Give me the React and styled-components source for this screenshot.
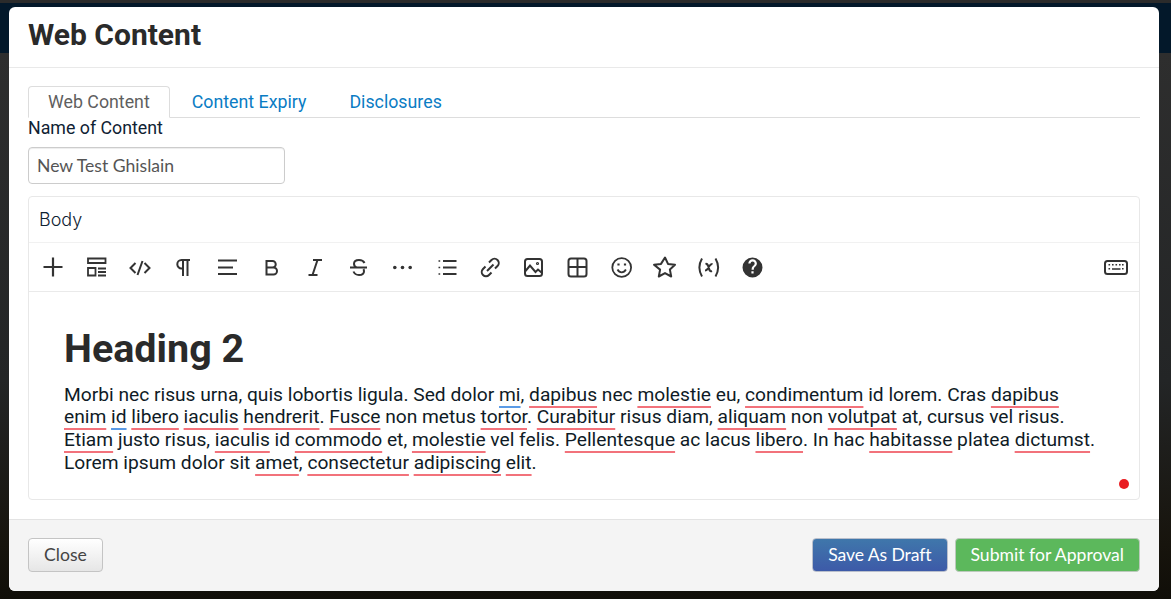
import React from 'react';
import styled, { createGlobalStyle } from 'styled-components';

const GlobalStyle = createGlobalStyle`
  html, body {
    margin: 0;
    height: 100%;
    overflow: hidden;
    background: #14110a;
  }
  #root { height: 100%; }
`;

const Page = styled.div`
  position: relative;
  width: 1171px;
  height: 599px;
  overflow: hidden;
  display: flex;
  flex-direction: column;
  background: #14110a;
`;

const PageStrip = styled.div`
  height: 3px;
  background: #2b2b2b;
`;

const PageHeader = styled.div`
  height: 50px;
  background: #03182a;
`;

const PageBody = styled.div`
  flex: 1;
  background: linear-gradient(180deg, #2e2e2e 0%, #232526 60%, #17140d 90%, #100e08 100%);
`;

const Modal = styled.div`
  position: absolute;
  left: 9px;
  top: 7px;
  width: 1150px;
  height: 584px;
  display: flex;
  flex-direction: column;
  background: #fff;
  border-radius: 6px;
  overflow: hidden;
  font-family: Roboto, sans-serif;
`;

const ModalHeader = styled.div`
  height: 56px;
  flex: none;
  display: flex;
  align-items: center;
  padding: 0 19px 4px;
  border-bottom: 1px solid #e9e9e9;
`;

const Title = styled.h3`
  margin: 0;
  font-size: 30px;
  font-weight: 700;
  color: #2a2a2a;
  line-height: 36px;
`;

const ModalBody = styled.div`
  flex: 1;
  padding: 18px 19px 0;
  display: flex;
  flex-direction: column;
`;

const Tabs = styled.div`
  display: flex;
  height: 31px;
  border-bottom: 1px solid #ddd;
`;

const Tab = styled.div`
  box-sizing: border-box;
  height: ${(p) => (p.$active ? '32px' : '31px')};
  padding: 0 ${(p) => (p.$active ? '19px' : '20px')} ${(p) => (p.$active ? '2px' : '1px')};
  margin-right: 1px;
  display: flex;
  align-items: center;
  font-size: 17.8px;
  color: ${(p) => (p.$active ? '#5f5f5f' : '#0a7cc4')};
  background: ${(p) => (p.$active ? '#fff' : 'transparent')};
  border: ${(p) => (p.$active ? '1px solid #ddd' : '1px solid transparent')};
  border-bottom-color: ${(p) => (p.$active ? '#fff' : 'transparent')};
  border-radius: 4px 4px 0 0;
`;

const FieldLabel = styled.label`
  display: block;
  font-size: 17.8px;
  line-height: 20px;
  color: #0f2233;
`;

const NameInput = styled.input`
  box-sizing: border-box;
  display: block;
  width: 257px;
  height: 37px;
  margin-top: 9px;
  padding: 0 8px;
  border: 1px solid #ccc;
  border-radius: 4px;
  font-family: Lato, sans-serif;
  font-size: 17.6px;
  color: #555;
  box-shadow: inset 0 1px 1px rgba(0, 0, 0, 0.075);
  outline: none;
`;

const Editor = styled.div`
  box-sizing: border-box;
  height: 304px;
  margin-top: 12px;
  position: relative;
  border: 1px solid #e8e8e8;
  border-radius: 4px;
  display: flex;
  flex-direction: column;
`;

const EditorLabel = styled.div`
  height: 45px;
  flex: none;
  display: flex;
  align-items: center;
  padding: 0 10px;
  font-family: Inter, sans-serif;
  font-weight: 300;
  font-size: 18px;
  color: #0f2233;
  border-bottom: 1px solid #f1f1f1;
`;

const Toolbar = styled.div`
  height: 48px;
  flex: none;
  display: flex;
  align-items: center;
  padding: 0 1.5px 0 2px;
  border-bottom: 1px solid #eaeaea;
`;

const ToolButton = styled.div`
  width: 43.75px;
  height: 40px;
  flex: none;
  display: flex;
  align-items: center;
  justify-content: center;
  color: #333;

  svg {
    width: 24px;
    height: 24px;
    display: block;
    flex: none;
  }
`;

const ToolSpacer = styled.div`
  flex: 1;
`;

const Content = styled.div`
  flex: 1;
  padding: 32px 35px 0;
  color: #0f1b26;
`;

const Heading = styled.h2`
  margin: 0 0 9.5px;
  font-size: 39.5px;
  font-weight: 700;
  line-height: 50px;
  color: #2a2a2a;
`;

const Paragraph = styled.p`
  margin: 0;
  font-size: 19.2px;
  line-height: 22.9px;
`;

const Mark = styled.span`
  text-decoration: underline;
  text-decoration-color: ${(p) => (p.$grammar ? '#5b9be6' : '#f2727b')};
  text-decoration-thickness: 2px;
  text-underline-offset: 5px;
  text-decoration-skip-ink: none;
`;

const StatusDot = styled.span`
  position: absolute;
  right: 10px;
  bottom: 10px;
  width: 10px;
  height: 10px;
  border-radius: 50%;
  background: #e91c21;
`;

const ModalFooter = styled.div`
  height: 69px;
  flex: none;
  display: flex;
  align-items: center;
  justify-content: space-between;
  padding: 0 19px 2px;
  background: #f4f4f4;
  border-top: 1px solid #e3e3e3;
`;

const FooterActions = styled.div`
  display: flex;
  gap: 7px;
`;

const Button = styled.button`
  box-sizing: border-box;
  height: 34px;
  padding: 0 15px;
  font-family: Lato, sans-serif;
  font-size: 17.6px;
  letter-spacing: ${(p) => p.$tracking || '0'};
  border-radius: 4px;
  border: 1px solid ${(p) => p.$border};
  color: ${(p) => p.$text};
  background: ${(p) => p.$fill};
  white-space: nowrap;
`;

const tools = [
  <path d="M12 2.500v19M2.500 12h19" stroke="currentColor" strokeWidth="2.200" fill="none" />,
  <g fill="none" stroke="currentColor" strokeWidth="1.800">
    <path d="M3 3.500h17.500v4.500H3z" />
    <path d="M3 13h7.500v7.500H3z" />
    <path d="M13 13.500h8M13 17h8M13 20.500h8" />
  </g>,
  <g fill="none" stroke="currentColor" strokeWidth="2">
    <path d="M7.500 8 2.500 13l5 5M16.500 8l5 5-5 5M14.500 6l-5 14" />
  </g>,
  <g fill="none" stroke="currentColor" strokeWidth="2">
    <path d="M18 5H9.500a4.200 4.200 0 0 0 0 8.400H11M11 5v16M15.500 5v16" />
  </g>,
  <path d="M2 5.500h19M2 12.500h15M2 19h19" stroke="currentColor" strokeWidth="2" fill="none" />,
  <path d="M6.500 6h6a3.200 3.200 0 0 1 0 6.500h-6zM6.500 12.500h7a3.500 3.500 0 0 1 0 7h-7z" stroke="currentColor" strokeWidth="2" fill="none" />,
  <path d="M10 5h9M5.500 20h9M14.500 5l-5 15" stroke="currentColor" strokeWidth="2" fill="none" />,
  <path d="M3 12.500h17M17.500 8C16.500 5.800 14.500 5 12 5 9 5 7 6.500 7 8.800c0 1.700 1 3 2.500 3.700M6.500 16.500C7.500 19 9.500 20 12 20c3 0 5-1.500 5-3.800 0-.9-.2-1.500-.6-2.100" stroke="currentColor" strokeWidth="2" fill="none" />,
  <g fill="currentColor">
    <circle cx="3.800" cy="12.500" r="1.800" />
    <circle cx="11.500" cy="12.500" r="1.800" />
    <circle cx="19.200" cy="12.500" r="1.800" />
  </g>,
  <g>
    <path d="M8 6h13.500M8 12.500h13.500M8 19h13.500" stroke="currentColor" strokeWidth="2" fill="none" />
    <path d="M3.500 5.200h1.700v1.600H3.500zM3.500 11.700h1.700v1.600H3.500zM3.500 18.200h1.700v1.600H3.500z" fill="currentColor" />
  </g>,
  <g fill="none" stroke="currentColor" strokeWidth="2">
    <path d="M11 7.500 13.500 5a4.200 4.200 0 0 1 6 6L17 13.500" />
    <path d="M13.500 17.500 11 20a4.200 4.200 0 0 1-6-6l2.500-2.500" />
    <path d="m9 16 6.500-6.500" />
  </g>,
  <g fill="none" stroke="currentColor" strokeWidth="2">
    <rect x="3" y="4" width="17" height="17" rx="2.500" />
    <path d="m3.500 16 4.500-5.500 5.500 6.500 2.500-2.500 3.500 3" />
    <circle cx="15.500" cy="8.500" r=".6" />
  </g>,
  <g fill="none" stroke="currentColor" strokeWidth="2">
    <rect x="2.500" y="3.500" width="18" height="18" rx="2.500" />
    <path d="M2.500 12h18M11.500 3.500v18" />
  </g>,
  <g fill="none" stroke="currentColor" strokeWidth="1.800">
    <circle cx="11.700" cy="12.500" r="9.400" />
    <path d="M7.500 14.500c1 1.800 2.500 2.800 4.200 2.800s3.200-1 4.200-2.800" />
    <path d="M8.500 8.500v2M15 8.500v2" strokeWidth="2.200" />
  </g>,
  <path d="m12 2.500 3 6.400 7 .9-5.100 4.800 1.300 6.900-6.200-3.400-6.200 3.400 1.300-6.900L1 9.800l7-.9z" stroke="currentColor" strokeWidth="2" strokeLinejoin="round" fill="none" />,
  <g fill="none" stroke="currentColor">
    <path d="M5 3.500C1.800 9 1.800 16 5 21.500M18.500 3.500c3.200 5.500 3.200 12.500 0 18" strokeWidth="2" />
    <path d="M8.500 9c1.300-.3 2 .3 2.500 1.500l1.500 4.500c.5 1.200 1.300 1.500 2.500 1M15.500 9c-1.500-.3-2.500 1-3.300 2.300L10.500 14c-.7 1.200-1.300 1.500-2.500 1.500" strokeWidth="2.100" />
  </g>,
  <path fillRule="evenodd" fill="currentColor" d="M11.500 2.500a10 10 0 1 0 0 20 10 10 0 0 0 0-20Zm1.100 16h-2.200v-2.200h2.200Zm2.300-7.600-.9.900c-.8.800-1.200 1.400-1.200 2.900h-2.200v-.5c0-1.100.4-2.100 1.200-2.900l1.300-1.300c.4-.4.600-.9.600-1.400a2.100 2.100 0 0 0-4.200 0H7.300a4.300 4.300 0 0 1 8.600 0c0 .9-.4 1.700-1 2.300Z" />,
];

const keyboard = (
  <g>
    <rect x="1" y="6" width="22" height="13" rx="2.500" fill="none" stroke="currentColor" strokeWidth="2" />
    <path fill="currentColor" d="M4.500 9h1.600v1.600H4.500zM8 9h1.600v1.600H8zM11.500 9h1.600v1.600h-1.600zM15 9h1.600v1.600H15zM18 9h1.600v1.600H18zM4.500 13h1.600v1.600H4.500zM8 13.200h8.500v1.600H8zM18 13h1.600v1.600H18z" />
  </g>
);

const App = () => (
  <>
    <GlobalStyle />
    <Page>
      <PageStrip />
      <PageHeader />
      <PageBody />
      <Modal>
        <ModalHeader>
          <Title>Web Content</Title>
        </ModalHeader>
        <ModalBody>
          <Tabs>
            <Tab $active>Web Content</Tab>
            <Tab>Content Expiry</Tab>
            <Tab>Disclosures</Tab>
          </Tabs>
          <FieldLabel>Name of Content</FieldLabel>
          <NameInput defaultValue="New Test Ghislain" />
          <Editor>
            <EditorLabel>Body</EditorLabel>
            <Toolbar>
              {tools.map((icon, i) => (
                <ToolButton key={i}>
                  <svg viewBox="0 0 24 24">{icon}</svg>
                </ToolButton>
              ))}
              <ToolSpacer />
              <ToolButton>
                <svg viewBox="0 0 24 24">{keyboard}</svg>
              </ToolButton>
            </Toolbar>
            <Content>
              <Heading>Heading 2</Heading>
              <Paragraph>
                Morbi nec risus urna, quis lobortis ligula. Sed dolor <Mark $grammar>mi</Mark>, <Mark>dapibus</Mark> nec <Mark>molestie</Mark> eu, <Mark>condimentum</Mark> id lorem. Cras <Mark>dapibus</Mark> <Mark>enim</Mark> <Mark $grammar>id</Mark> <Mark>libero</Mark> <Mark>iaculis</Mark> <Mark>hendrerit</Mark>. <Mark>Fusce</Mark> non metus <Mark>tortor</Mark>. <Mark>Curabitur</Mark> risus diam, <Mark>aliquam</Mark> non <Mark>volutpat</Mark> at, cursus vel risus. <Mark>Etiam</Mark> justo risus, <Mark>iaculis</Mark> id <Mark>commodo</Mark> et, <Mark>molestie</Mark> vel felis. <Mark>Pellentesque</Mark> ac lacus <Mark>libero</Mark>. In hac <Mark>habitasse</Mark> platea <Mark>dictumst</Mark>. Lorem ipsum dolor sit <Mark>amet</Mark>, <Mark>consectetur</Mark> <Mark>adipiscing</Mark> <Mark>elit</Mark>.
              </Paragraph>
            </Content>
            <StatusDot />
          </Editor>
        </ModalBody>
        <ModalFooter>
          <Button $fill="linear-gradient(180deg, #fff, #e6e6e6)" $border="#c4c4c4" $text="#444">Close</Button>
          <FooterActions>
            <Button $tracking="-0.1px" $fill="linear-gradient(180deg, #3f77ab, #3d5aa8)" $border="#b9bfcc" $text="#fff">Save As Draft</Button>
            <Button $fill="#5cb85c" $border="#bcc9bc" $text="#fff">Submit for Approval</Button>
          </FooterActions>
        </ModalFooter>
      </Modal>
    </Page>
  </>
);

export default App;
